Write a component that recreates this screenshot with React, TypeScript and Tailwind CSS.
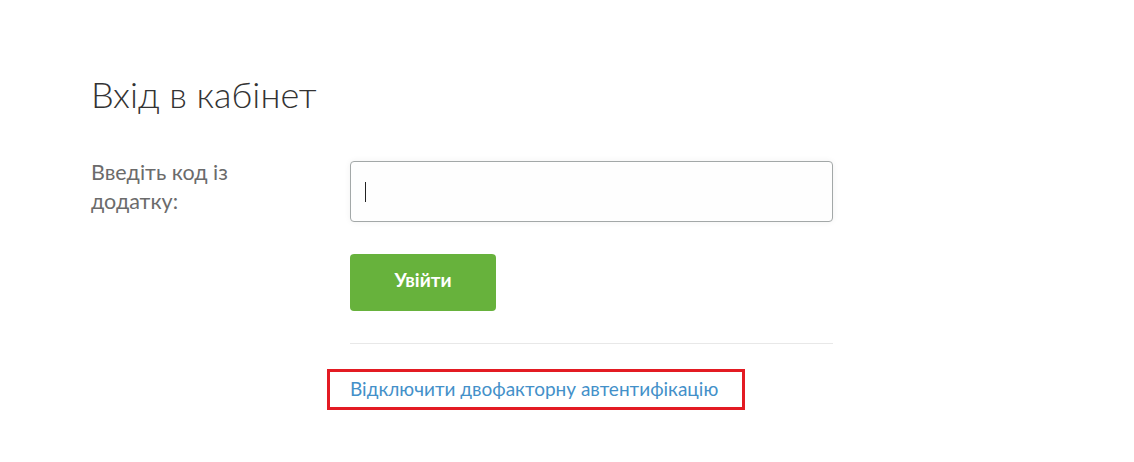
const App = () => {
  return (
    <div className="min-h-[462px] bg-white font-['Lato',_'Noto_Sans',_sans-serif]">
      <div className="pl-[91px] pt-[72px]">
        <h1 className="text-[36px] leading-[44px] font-light text-[#333333]">Вхід в кабінет</h1>

        <div className="mt-[45px] flex">
          <label className="w-[259px] -mt-[3px] text-[21.5px] leading-[29px] text-[#6b6b6b]">
            Введіть код із
            <br />
            додатку:
          </label>
          <div className="w-[483px]">
            <div className="h-[61px] rounded-[4px] border border-[#a3a8a8] bg-[#fefefe] shadow-[0_0_6px_rgba(0,0,0,0.06)] flex items-center px-[14px]">
              <span className="block w-[1px] h-[20px] bg-[#222222]" />
            </div>

            <button className="mt-[32px] h-[57px] w-[146px] rounded-[4px] bg-[#67b23c] pb-[4px] text-[19px] font-bold text-white">
              Увійти
            </button>

            <div className="mt-[32px] h-[1px] bg-[#e8e8e8]" />
          </div>
        </div>

        <div className="mt-[25px] ml-[236px] w-[418px] h-[41px] border-[3px] border-[#e31b23] flex items-center pl-[20px]">
          <a href="#" className="text-[19px] text-[#4390c9]">
            Відключити двофакторну автентифікацію
          </a>
        </div>
      </div>
    </div>
  );
};

export default App;
